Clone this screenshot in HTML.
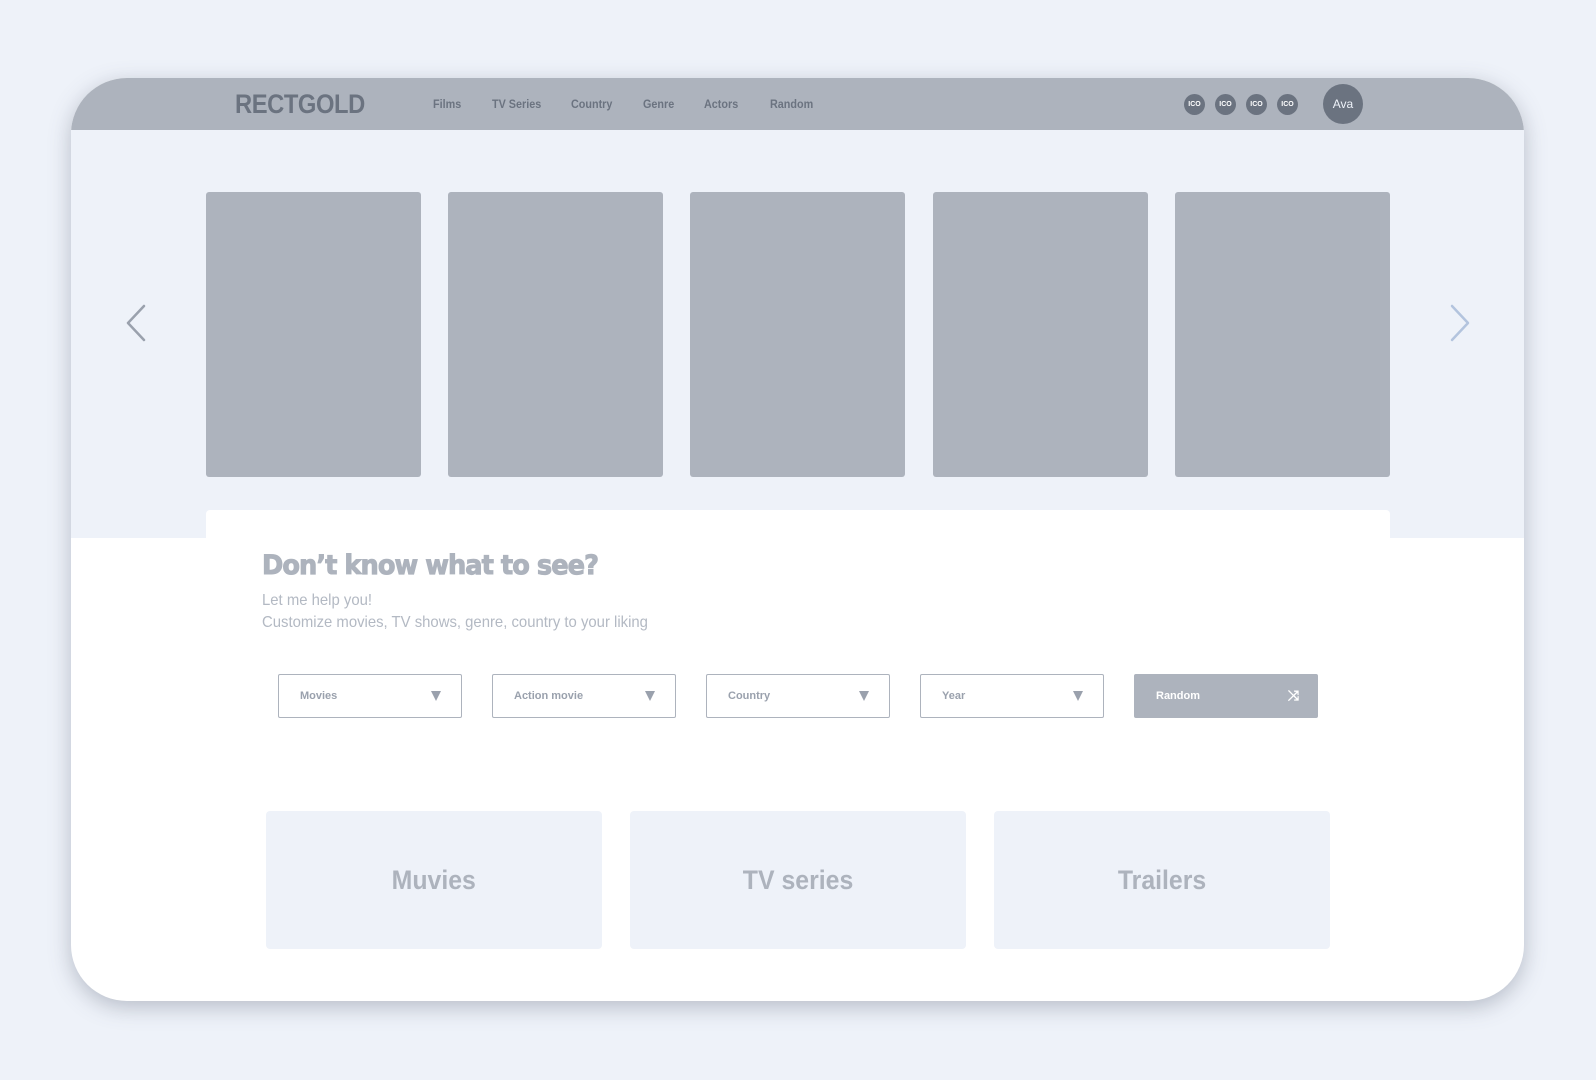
<!DOCTYPE html>
<html><head><meta charset="utf-8"><style>
*{margin:0;padding:0;box-sizing:border-box}
body{width:1596px;height:1080px;background:#eef2f9;position:relative;overflow:hidden;font-family:"Liberation Sans",sans-serif}
.frame{position:absolute;left:71px;top:78px;width:1453px;height:923px;border-radius:56px;background:#fff;overflow:hidden;box-shadow:0 6px 22px rgba(80,90,110,.35)}
.hdr{position:absolute;left:0;top:0;width:100%;height:52px;background:#adb3bd}
.top{position:absolute;left:0;top:52px;width:100%;height:408px;background:#eef2f9}
.a{position:absolute}
.sx{transform-origin:0 50%;white-space:nowrap}
.logo{left:164px;top:11px;font-size:27px;font-weight:bold;color:#6b7380;letter-spacing:-0.5px;transform:scaleX(.88)}
.nav{top:19px;font-size:12px;font-weight:bold;color:#6b7380;transform:scaleX(.9)}
.ico{width:21px;height:21px;border-radius:50%;background:#6b7380;color:#fff;font-size:7px;font-weight:bold;text-align:center;line-height:21px;top:16px}
.ava{width:40px;height:40px;border-radius:50%;background:#6b7380;color:#eef2f9;font-size:12px;text-align:center;line-height:40px;left:1252px;top:6px}
.card{top:114px;width:215px;height:285px;background:#adb3bd;border-radius:3px}
.panel{left:135px;top:432px;width:1184px;height:100px;background:#fff;border-radius:4px}
h1{position:absolute;left:191px;top:472px;font-size:27px;font-weight:900;color:#adb3bd;font-family:"DejaVu Sans",sans-serif;letter-spacing:-1px;transform:scaleX(.95);transform-origin:0 50%;white-space:nowrap;-webkit-text-stroke:1px #adb3bd}
.sub{left:191px;font-size:16px;color:#b3b9c3;transform:scaleX(.93)}
.dd{top:596px;width:184px;height:44px;border:1.5px solid #adb3bd;border-radius:2px;font-size:11px;font-weight:bold;color:#9aa1ad;padding:15px 0 0 21px}
.dd i{position:absolute;right:20px;top:16px;width:0;height:0;border-left:5px solid transparent;border-right:5px solid transparent;border-top:10px solid #9aa1ad}
.btn{background:#adb3bd;border-color:#adb3bd;color:#fff}
.bc{top:733px;width:336px;height:138px;background:#eef2f9;border-radius:4px;text-align:center;line-height:138px;font-size:27px;font-weight:bold;color:#adb3bd}
.bc span{display:inline-block;transform:scaleX(.92)}
</style></head><body>
<div class="frame">
<div class="top"></div>
<div class="hdr">
<div class="a logo sx">RECTGOLD</div>
<div class="a nav sx" style="left:362px">Films</div>
<div class="a nav sx" style="left:421px">TV Series</div>
<div class="a nav sx" style="left:500px">Country</div>
<div class="a nav sx" style="left:572px">Genre</div>
<div class="a nav sx" style="left:633px">Actors</div>
<div class="a nav sx" style="left:699px">Random</div>
<div class="a ico" style="left:1113px">ICO</div>
<div class="a ico" style="left:1144px">ICO</div>
<div class="a ico" style="left:1175px">ICO</div>
<div class="a ico" style="left:1206px">ICO</div>
<div class="a ava">Ava</div>
</div>
<svg class="a" style="left:54px;top:226px" width="22" height="38"><path d="M19 2 L3 19 L19 36" fill="none" stroke="#9aa1ad" stroke-width="2.5" stroke-linecap="round" stroke-linejoin="round"/></svg>
<svg class="a" style="left:1378px;top:226px" width="22" height="38"><path d="M3 2 L19 19 L3 36" fill="none" stroke="#b3c4de" stroke-width="2.5" stroke-linecap="round" stroke-linejoin="round"/></svg>
<div class="a card" style="left:135px"></div>
<div class="a card" style="left:377px"></div>
<div class="a card" style="left:619px"></div>
<div class="a card" style="left:862px"></div>
<div class="a card" style="left:1104px"></div>
<div class="a panel"></div>
<h1>Don’t know what to see?</h1>
<div class="a sub sx" style="top:514px">Let me help you!</div>
<div class="a sub sx" style="top:536px">Customize movies, TV shows, genre, country to your liking</div>
<div class="a dd" style="left:207px">Movies<i></i></div>
<div class="a dd" style="left:421px">Action movie<i></i></div>
<div class="a dd" style="left:635px">Country<i></i></div>
<div class="a dd" style="left:849px">Year<i></i></div>
<div class="a dd btn" style="left:1063px">Random<span style="position:absolute;right:18px;top:12px;font-size:14px">⤨</span></div>
<div class="a bc" style="left:195px"><span>Muvies</span></div>
<div class="a bc" style="left:559px"><span>TV series</span></div>
<div class="a bc" style="left:923px"><span>Trailers</span></div>
</div>
</body></html>
